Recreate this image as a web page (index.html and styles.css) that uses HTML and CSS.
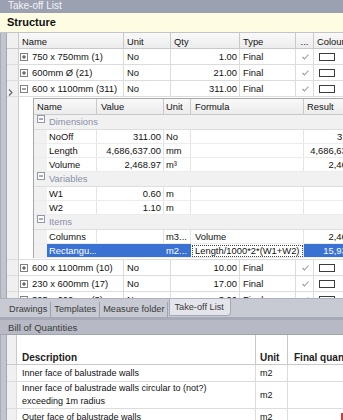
FILE: index.html
```html
<!DOCTYPE html>
<html lang="en">
<head>
    <meta charset="utf-8">
    <title>Take-off List</title>
    <link rel="stylesheet" href="styles.css">
</head>
<body>
    <div class="panel-title">Take-off List</div>
    <div class="structure-bar">Structure</div>

    <div class="frame takeoff-frame">
        <div class="grid top-grid">
            <div class="row head">
                <div class="c sel"></div>
                <div class="c t-name">Name</div>
                <div class="c t-unit">Unit</div>
                <div class="c t-qty">Qty</div>
                <div class="c t-type">Type</div>
                <div class="c t-dots">...</div>
                <div class="c t-col">Colour</div>
            </div>
            <div class="row">
                <div class="c sel"></div>
                <div class="c t-name"><svg class="box-icon" width="8" height="8" viewBox="0 0 8 8"><rect x="0.5" y="0.5" width="7" height="7" fill="#fff" stroke="#808080"/><path d="M2 4h4M4 2v4" stroke="#404040"/></svg>750 x 750mm (1)</div>
                <div class="c t-unit">No</div>
                <div class="c t-qty num">1.00</div>
                <div class="c t-type">Final</div>
                <div class="c t-dots"><svg class="tick" width="7" height="6" viewBox="0 0 7 6"><path d="M0.5 3l2 2 4-4.5" fill="none" stroke="#9a9a9a" stroke-width="1.1"/></svg></div>
                <div class="c t-col"><span class="swatch"></span></div>
            </div>
            <div class="row">
                <div class="c sel"></div>
                <div class="c t-name"><svg class="box-icon" width="8" height="8" viewBox="0 0 8 8"><rect x="0.5" y="0.5" width="7" height="7" fill="#fff" stroke="#808080"/><path d="M2 4h4M4 2v4" stroke="#404040"/></svg>600mm Ø (21)</div>
                <div class="c t-unit">No</div>
                <div class="c t-qty num">21.00</div>
                <div class="c t-type">Final</div>
                <div class="c t-dots"><svg class="tick" width="7" height="6" viewBox="0 0 7 6"><path d="M0.5 3l2 2 4-4.5" fill="none" stroke="#9a9a9a" stroke-width="1.1"/></svg></div>
                <div class="c t-col"><span class="swatch"></span></div>
            </div>
            <div class="row">
                <div class="c sel"><svg width="5" height="7" viewBox="0 0 5 7"><path d="M1 0.5l3 3-3 3" fill="none" stroke="#606060" stroke-width="1.1"/></svg></div>
                <div class="c t-name"><svg class="box-icon" width="8" height="8" viewBox="0 0 8 8"><rect x="0.5" y="0.5" width="7" height="7" fill="#fff" stroke="#808080"/><path d="M2 4h4" stroke="#404040"/></svg>600 x 1100mm (311)</div>
                <div class="c t-unit">No</div>
                <div class="c t-qty num">311.00</div>
                <div class="c t-type">Final</div>
                <div class="c t-dots"><svg class="tick" width="7" height="6" viewBox="0 0 7 6"><path d="M0.5 3l2 2 4-4.5" fill="none" stroke="#9a9a9a" stroke-width="1.1"/></svg></div>
                <div class="c t-col"><span class="swatch"></span></div>
            </div>

            <!-- detail view of the expanded row -->
            <div class="row detail">
                <div class="c sel"></div>
                <div class="detail-body">
                    <div class="grid sub-grid">
                        <div class="row head">
                            <div class="c s-namehead">Name</div>
                            <div class="c s-value">Value</div>
                            <div class="c s-unit">Unit</div>
                            <div class="c s-formula">Formula</div>
                            <div class="c s-result">Result</div>
                        </div>
                        <div class="row group">
                            <svg class="box-icon" width="8" height="8" viewBox="0 0 8 8"><rect x="0.5" y="0.5" width="7" height="7" fill="#fff" stroke="#9096ae"/><path d="M2 4h4" stroke="#505670"/></svg>Dimensions
                        </div>
                        <div class="row">
                            <div class="c s-indent"></div>
                            <div class="c s-name">NoOff</div>
                            <div class="c s-value num">311.00</div>
                            <div class="c s-unit">No</div>
                            <div class="c s-formula"></div>
                            <div class="c s-result num">311.00</div>
                        </div>
                        <div class="row">
                            <div class="c s-indent"></div>
                            <div class="c s-name">Length</div>
                            <div class="c s-value num">4,686,637.00</div>
                            <div class="c s-unit">mm</div>
                            <div class="c s-formula"></div>
                            <div class="c s-result num">4,686,637.00</div>
                        </div>
                        <div class="row">
                            <div class="c s-indent"></div>
                            <div class="c s-name">Volume</div>
                            <div class="c s-value num">2,468.97</div>
                            <div class="c s-unit">m³</div>
                            <div class="c s-formula"></div>
                            <div class="c s-result num">2,468.97</div>
                        </div>
                        <div class="row group">
                            <svg class="box-icon" width="8" height="8" viewBox="0 0 8 8"><rect x="0.5" y="0.5" width="7" height="7" fill="#fff" stroke="#9096ae"/><path d="M2 4h4" stroke="#505670"/></svg>Variables
                        </div>
                        <div class="row">
                            <div class="c s-indent"></div>
                            <div class="c s-name">W1</div>
                            <div class="c s-value num">0.60</div>
                            <div class="c s-unit">m</div>
                            <div class="c s-formula"></div>
                            <div class="c s-result num"></div>
                        </div>
                        <div class="row">
                            <div class="c s-indent"></div>
                            <div class="c s-name">W2</div>
                            <div class="c s-value num">1.10</div>
                            <div class="c s-unit">m</div>
                            <div class="c s-formula"></div>
                            <div class="c s-result num"></div>
                        </div>
                        <div class="row group">
                            <svg class="box-icon" width="8" height="8" viewBox="0 0 8 8"><rect x="0.5" y="0.5" width="7" height="7" fill="#fff" stroke="#9096ae"/><path d="M2 4h4" stroke="#505670"/></svg>Items
                        </div>
                        <div class="row">
                            <div class="c s-indent"></div>
                            <div class="c s-name">Columns</div>
                            <div class="c s-value"></div>
                            <div class="c s-unit">m3...</div>
                            <div class="c s-formula">Volume</div>
                            <div class="c s-result num">2,468.97</div>
                        </div>
                        <div class="row selected">
                            <div class="c s-indent"></div>
                            <div class="c s-name">Rectangu...</div>
                            <div class="c s-value"></div>
                            <div class="c s-unit">m2...</div>
                            <div class="c s-formula editing"><span>Length/1000*2*(W1+W2)</span></div>
                            <div class="c s-result num">15,934.57</div>
                        </div>
                    </div>
                </div>
            </div>

            <div class="row">
                <div class="c sel"></div>
                <div class="c t-name"><svg class="box-icon" width="8" height="8" viewBox="0 0 8 8"><rect x="0.5" y="0.5" width="7" height="7" fill="#fff" stroke="#808080"/><path d="M2 4h4M4 2v4" stroke="#404040"/></svg>600 x 1100mm (10)</div>
                <div class="c t-unit">No</div>
                <div class="c t-qty num">10.00</div>
                <div class="c t-type">Final</div>
                <div class="c t-dots"><svg class="tick" width="7" height="6" viewBox="0 0 7 6"><path d="M0.5 3l2 2 4-4.5" fill="none" stroke="#9a9a9a" stroke-width="1.1"/></svg></div>
                <div class="c t-col"><span class="swatch"></span></div>
            </div>
            <div class="row">
                <div class="c sel"></div>
                <div class="c t-name"><svg class="box-icon" width="8" height="8" viewBox="0 0 8 8"><rect x="0.5" y="0.5" width="7" height="7" fill="#fff" stroke="#808080"/><path d="M2 4h4M4 2v4" stroke="#404040"/></svg>230 x 600mm (17)</div>
                <div class="c t-unit">No</div>
                <div class="c t-qty num">17.00</div>
                <div class="c t-type">Final</div>
                <div class="c t-dots"><svg class="tick" width="7" height="6" viewBox="0 0 7 6"><path d="M0.5 3l2 2 4-4.5" fill="none" stroke="#9a9a9a" stroke-width="1.1"/></svg></div>
                <div class="c t-col"><span class="swatch"></span></div>
            </div>
            <div class="row">
                <div class="c sel"></div>
                <div class="c t-name"><svg class="box-icon" width="8" height="8" viewBox="0 0 8 8"><rect x="0.5" y="0.5" width="7" height="7" fill="#fff" stroke="#808080"/><path d="M2 4h4M4 2v4" stroke="#404040"/></svg>305 x 600mm (3)</div>
                <div class="c t-unit">No</div>
                <div class="c t-qty num">3.00</div>
                <div class="c t-type">Final</div>
                <div class="c t-dots"><svg class="tick" width="7" height="6" viewBox="0 0 7 6"><path d="M0.5 3l2 2 4-4.5" fill="none" stroke="#9a9a9a" stroke-width="1.1"/></svg></div>
                <div class="c t-col"><span class="swatch"></span></div>
            </div>
        </div>
    </div>

    <div class="tabs">
        <span class="tab">Drawings</span>
        <span class="tab">Templates</span>
        <span class="tab">Measure folder</span>
        <span class="tab active">Take-off List</span>
    </div>
    <div class="splitter"></div>
    <div class="boq-title">Bill of Quantities</div>

    <div class="frame boq-frame">
        <div class="grid boq-grid">
            <div class="row head">
                <div class="c b-sel"></div>
                <div class="c b-desc">Description</div>
                <div class="c b-unit">Unit</div>
                <div class="c b-final">Final quantity</div>
            </div>
            <div class="row">
                <div class="c b-sel"></div>
                <div class="c b-desc">Inner face of balustrade walls</div>
                <div class="c b-unit">m2</div>
                <div class="c b-final"></div>
            </div>
            <div class="row tall">
                <div class="c b-sel"></div>
                <div class="c b-desc">Inner face of balustrade walls circular to (not?)<br>exceeding 1m radius</div>
                <div class="c b-unit">m2</div>
                <div class="c b-final"></div>
            </div>
            <div class="row">
                <div class="c b-sel"></div>
                <div class="c b-desc">Outer face of balustrade walls</div>
                <div class="c b-unit">m2</div>
                <div class="c b-final"><span class="flag"></span></div>
            </div>
        </div>
    </div>
</body>
</html>
```

FILE: styles.css
```css
:root {
    --frame-color: #c2c5ce;
    --line-color: #dcdcdc;
    --header-line: #c9c9c9;
    --sel-bg: #f0f0f0;
    --group-bg: #f1f1f1;
    --group-text: #8a8fa8;
    --select-blue: #3a72d4;
}

* { box-sizing: border-box; }

body {
    margin: 0;
    width: 343px;
    height: 420px;
    overflow: hidden;
    font-family: "Liberation Sans", Arial, sans-serif;
    font-size: 9.4px;
    color: #111;
    background: var(--frame-color);
}

.panel-title { height: 13px; line-height: 12px; padding-left: 8px; font-size: 10px; color: #f4f4f6; background: #9ca1b2; }
.structure-bar { height: 20px; line-height: 19px; padding-left: 7px; font-size: 11px; font-weight: bold; background: #fefde4; border-bottom: 1px solid #c4c4c4; }

.frame { padding-left: 5px; overflow: hidden; border-left: 1px solid #a9adb8; }
.takeoff-frame { height: 265px; }
.boq-frame { height: 85px; }

.grid { background: #fff; width: 370px; border-left: 1px solid #a3a7b2; }
.row { display: flex; height: 16px; border-bottom: 1px solid var(--line-color); }
.c { flex: none; height: 100%; padding: 0 3px; line-height: 15px; white-space: nowrap; overflow: hidden; border-right: 1px solid var(--line-color); }
.num { text-align: right; }
.head { background: linear-gradient(#f9f9f9, #ececec); border-bottom-color: var(--header-line); }
.head .c { border-right-color: var(--header-line); padding-top: 1px; }

/* top take-off grid */
.sel { width: 12px; background: var(--sel-bg); padding: 4px 0 0 1px; border-right-color: #cdcdcd; }
.head .sel { padding: 0; }
.t-name { width: 105px; padding-left: 1px; }
.head .t-name { padding-left: 3px; }
.t-unit { width: 47px; }
.t-qty { width: 69px; padding-right: 2px; }
.head .t-qty { text-align: left; }
.t-type { width: 56px; }
.t-dots { width: 18px; text-align: center; }
.t-col { width: 60px; border-right: none; padding-left: 5px; }
.head .t-col { padding-left: 3px; }
.box-icon { vertical-align: -1px; margin-right: 4px; }
.tick { vertical-align: 0; margin-left: 2px; }
.swatch { display: inline-block; width: 16px; height: 8px; border: 1px solid #3c3c3c; background: #fff; vertical-align: -1px; }

/* expanded detail */
.row.detail { height: 163px; }
.detail-body { flex: none; width: 352px; padding: 1px 0 0 14px; }

.sub-grid { height: 160px; border-top: 1px solid #a8a8a8; border-left: 1px solid #a8a8a8; width: 338px; }
.sub-grid .row { height: 14px; border-bottom-color: #ececec; }
.sub-grid .c { line-height: 13px; border-right-color: #e4e4e4; }
.sub-grid .row.head { height: 16px; border-bottom-color: var(--header-line); }
.sub-grid .head .c { line-height: 14px; border-right-color: var(--header-line); }
.sub-grid .row.group { height: 15px; line-height: 14px; padding-left: 3px; background: var(--group-bg); color: var(--group-text); border-bottom-color: #dedede; }
.s-namehead { width: 63px; }
.s-indent { width: 13px; background: var(--group-bg); border-right: none; }
.s-name { width: 50px; padding-left: 2px; }
.s-value { width: 67px; padding-right: 2px; }
.head .s-value { text-align: left; padding-left: 4px; }
.s-unit { width: 27px; padding-left: 2px; }
.s-formula { width: 113px; padding-left: 4px; }
.s-result { width: 64px; border-right: none; }

.row.selected .s-name, .row.selected .s-value, .row.selected .s-unit, .row.selected .s-result { background: var(--select-blue); color: #fff; border-right-color: var(--select-blue); }
.s-formula.editing { padding: 1px 0 0 1px; }
.s-formula.editing span { display: block; height: 12px; line-height: 10px; padding-left: 2px; border: 1px dotted #444; background: #fff; }

/* tab strip and splitter */
.tabs { display: flex; height: 19px; padding-left: 6px; background: #c7cad3; border-top: 1px solid #b0b3bd; }
.tab { padding: 0 3px; margin: 3px 0 0; line-height: 14px; height: 15px; color: #3a3a3a; font-size: 9.2px; border-right: 1px solid #9ea2ae; }
.tab:first-child { padding-left: 3px; }
.tab.active { margin: 0 0 0 1px; height: 17px; line-height: 17px; padding: 0 6px 0 4px; background: #e4e5ea; border: 1px solid #a5a9b5; border-top: none; border-radius: 0 0 4px 0; }
.splitter { height: 3px; background: #a6aab6; }
.boq-title { height: 15px; line-height: 15px; padding-left: 8px; font-size: 9.6px; color: #3c3c3c; background: #b7bac5; border-bottom: 1px solid #a0a4b0; }

/* bill of quantities grid */
.boq-grid { font-size: 9px; width: 350px; }
.boq-grid .row.head { height: 30px; background: #fff; }
.boq-grid .head .c { padding-top: 15px; font-weight: bold; font-size: 10px; color: #222; }
.boq-grid .row { height: 17px; }
.boq-grid .row.tall { height: 27px; }
.boq-grid .c { line-height: 16px; }
.boq-grid .row.tall .c { line-height: 13px; padding-top: 0; }
.boq-grid .row.tall .b-unit { line-height: 27px; }
.b-sel { width: 10px; background: var(--sel-bg); padding: 0; }
.b-desc { width: 239px; padding-left: 5px; }
.b-unit { width: 32px; padding-left: 4px; }
.b-final { width: 68px; border-right: none; padding-left: 6px; }
.flag { display: inline-block; width: 4px; height: 9px; margin: 4px 0 0 47px; background: #d43a3a; }
```
